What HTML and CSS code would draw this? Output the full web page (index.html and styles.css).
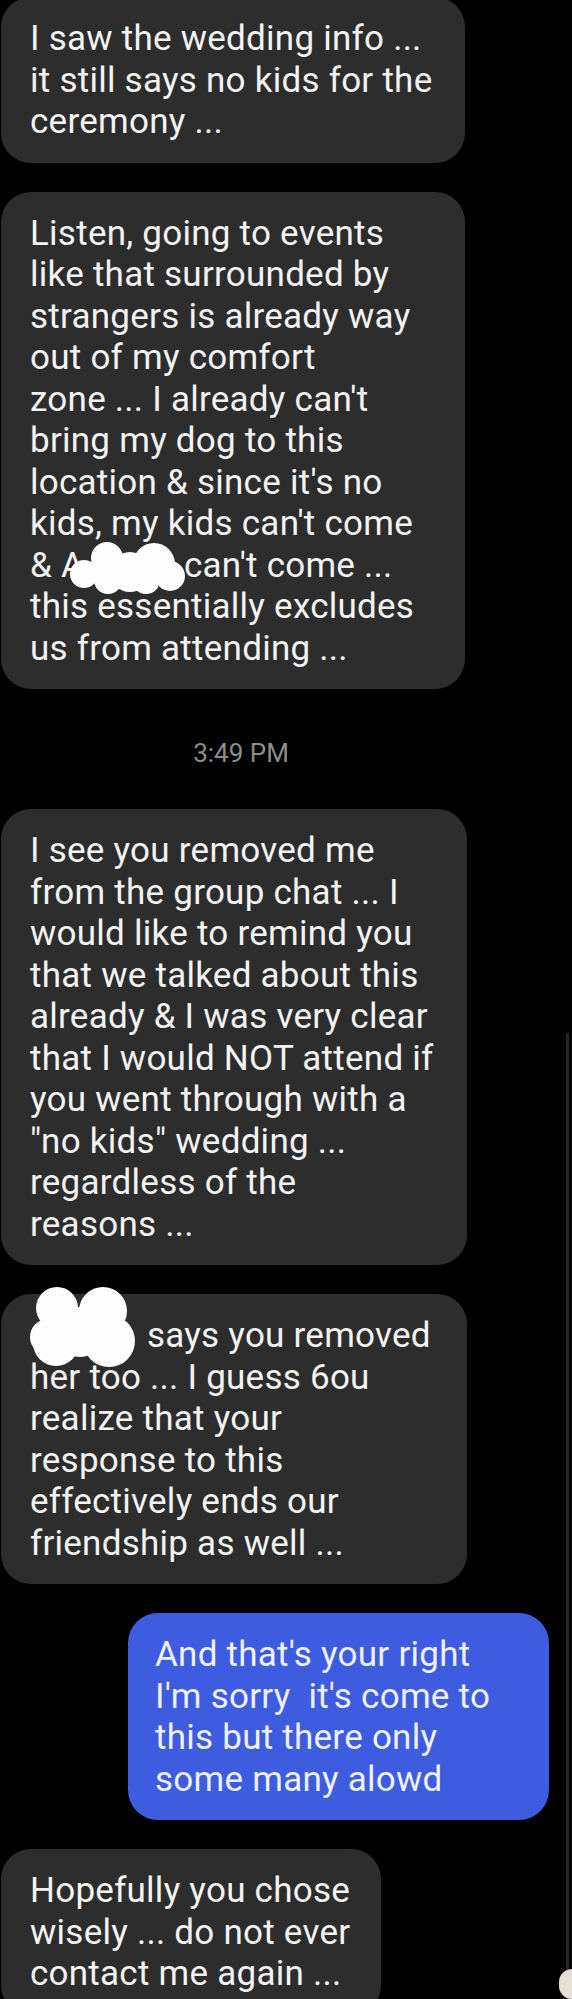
FILE: index.html
```html
<!DOCTYPE html>
<html lang="en">
  <head>
    <meta charset="UTF-8" />
    <meta name="viewport" content="width=device-width, initial-scale=1.0" />
    <title>Messages</title>
    <link rel="stylesheet" href="styles.css">
  </head>
  <body>
    <main class="thread">
      <div class="bubble bubble-in">I saw the wedding info ...<br>it still says no kids for the<br>ceremony ...</div>

      <div class="bubble bubble-in">Listen, going to events<br>like that surrounded by<br>strangers is already way<br>out of my comfort<br>zone ... I already can't<br>bring my dog to this<br>location &amp; since it's no<br>kids, my kids can't come<br>&amp; <span class="redact redact-name">A<svg viewBox="0 0 115 52" width="115" height="52"><circle cx="14" cy="32" r="14"/><circle cx="37" cy="16" r="16"/><circle cx="60" cy="30" r="20"/><circle cx="84" cy="22" r="21"/><circle cx="100" cy="34" r="15"/><circle cx="38" cy="38" r="14"/><circle cx="76" cy="38" r="14"/></svg></span>can't come ...<br>this essentially excludes<br>us from attending ...</div>

      <div class="stamp">3:49 PM</div>

      <div class="bubble bubble-in bubble-wide">I see you removed me<br>from the group chat ... I<br>would like to remind you<br>that we talked about this<br>already &amp; I was very clear<br>that I would NOT attend if<br>you went through with a<br>"no kids" wedding ...<br>regardless of the<br>reasons ...</div>

      <div class="bubble bubble-in bubble-wide"><span class="redact redact-lead"><svg viewBox="0 0 107 80" width="107" height="80"><circle cx="27" cy="21" r="21"/><circle cx="73" cy="24" r="24"/><circle cx="18" cy="50" r="18"/><circle cx="50" cy="45" r="25"/><circle cx="26" cy="56" r="23"/><circle cx="79" cy="54" r="26"/></svg></span> says you removed<br>her too ... I guess 6ou<br>realize that your<br>response to this<br>effectively ends our<br>friendship as well ...</div>

      <div class="bubble bubble-out">And that's your right<br>I'm sorry&nbsp; it's come to<br>this but there only<br>some many alowd</div>

      <div class="bubble bubble-in bubble-short">Hopefully you chose<br>wisely ... do not ever<br>contact me again ...</div>
    </main>

    <!-- scroll indicator on the right edge -->
    <div class="scroll-track"></div>
    <div class="scroll-thumb"></div>
  </body>
</html>
```

FILE: styles.css
```css
html,
body {
  height: 1999px;
  overflow: hidden;
}
body {
  margin: 0;
  background-color: #000;
  font-family: Roboto, "Liberation Sans", sans-serif;
  position: relative;
}
.thread {
  display: flex;
  flex-direction: column;
  align-items: flex-start;
  gap: 29px;
  margin-top: -3px;
}
.bubble {
  box-sizing: border-box;
  width: 464px;
  margin-left: 1px;
  padding: 21px 20px 20px 29px;
  border-radius: 30px;
  background-color: #2d2d2d;
  color: #f3f3f3;
  font-size: 35px;
  letter-spacing: 0.25px;
  line-height: 41.5px;
  white-space: nowrap;
}
.bubble-wide {
  width: 466px;
}
.bubble-short {
  width: 380px;
}
.bubble-out {
  align-self: flex-end;
  width: 421px;
  margin-right: 23px;
  padding-left: 27px;
  background-color: #3e5ce0;
  color: #eef0fa;
}
.stamp {
  width: 482px;
  padding: 20px 0 12px;
  text-align: center;
  color: #8c8c8c;
  font-size: 26px;
  line-height: 30px;
}
.redact {
  position: relative;
  display: inline-block;
  vertical-align: top;
  height: 41.5px;
}
.redact svg {
  position: absolute;
  fill: #fdfdfd;
  filter: blur(0.6px);
}
.redact-name {
  width: 123px;
}
.redact-name svg {
  left: 9px;
  top: -3px;
}
.redact-lead {
  width: 108px;
}
.redact-lead svg {
  left: 0;
  top: -28px;
}
.scroll-track {
  position: absolute;
  top: 1033px;
  right: 3px;
  bottom: 0;
  width: 3px;
  background-color: #262626;
}
.scroll-thumb {
  position: absolute;
  right: 0;
  bottom: 0;
  width: 13px;
  height: 30px;
  border-radius: 15px 0 0 15px;
  background-color: #e6e0d6;
}
```
